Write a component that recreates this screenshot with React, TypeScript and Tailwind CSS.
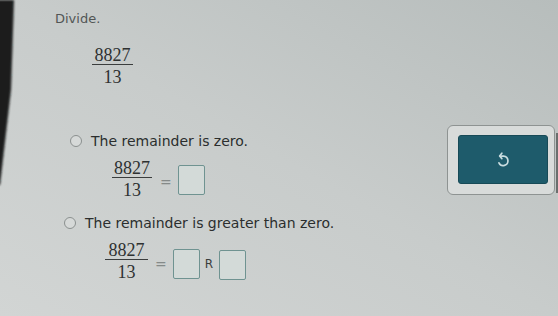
import React from "react";

const serif = { fontFamily: '"Liberation Serif", "Times New Roman", serif' };

function Fraction({ num, den, width }: { num: string; den: string; width: string }) {
  return (
    <div className={`flex flex-col items-center ${width}`} style={serif}>
      <div className="w-full text-center text-[18px] leading-[18px] text-[#2e3131]">{num}</div>
      <div className="w-full h-[1px] bg-[#3a3d3d]" />
      <div className="mt-[3px] w-full text-center text-[18px] leading-[18px] text-[#2e3131]">{den}</div>
    </div>
  );
}

function Box() {
  return <div className="w-[27px] h-[30px] rounded-[2px] border border-[#6f9391] bg-[#d3dad8]" />;
}

function Radio() {
  return <div className="w-[12px] h-[12px] rounded-full border-[1.5px] border-[#8b908f] bg-[#d6d9d8]" />;
}

function Eq() {
  return (
    <span className="text-[14px] leading-[14px] text-[#858a89]" style={{ fontFamily: '"DejaVu Sans", sans-serif' }}>
      =
    </span>
  );
}

export default function App() {
  const sans = { fontFamily: '"DejaVu Sans", Verdana, sans-serif' };
  return (
    <div
      className="relative flex w-[558px] h-[316px] overflow-hidden bg-linear-to-bl from-[#b7bdbc] via-[#c8cccb] to-[#d2d5d4]"
      style={sans}
    >
      <svg className="absolute left-0 top-0" width="20" height="200" viewBox="0 0 20 200">
        <defs>
          <filter id="blur">
            <feGaussianBlur stdDeviation="1" />
          </filter>
        </defs>
        <polygon points="-2,0 14,0 11,90 0,185 -2,185" fill="#1b1f1f" filter="url(#blur)" />
      </svg>

      <div className="flex flex-col w-[447px] pt-[11px]">
        <div className="ml-[55px] text-[13px] leading-[16px] text-[#525656]">Divide.</div>

        <div className="mt-[19px] ml-[92px]">
          <Fraction num="8827" den="13" width="w-[41px]" />
        </div>

        <div className="mt-[46px] ml-[70px] flex items-center h-[18px]">
          <Radio />
          <span className="ml-[9px] text-[14px] leading-[18px] text-[#2b2e2e]">The remainder is zero.</span>
        </div>

        <div className="mt-[9px] ml-[112px] flex items-center">
          <Fraction num="8827" den="13" width="w-[40px]" />
          <div className="ml-[8px] mt-[6px]">
            <Eq />
          </div>
          <div className="ml-[6px] mt-[2px]">
            <Box />
          </div>
        </div>

        <div className="mt-[15px] ml-[64px] flex items-center h-[18px]">
          <Radio />
          <span className="ml-[9px] text-[14px] leading-[18px] text-[#2b2e2e]">
            The remainder is greater than zero.
          </span>
        </div>

        <div className="mt-[9px] ml-[105px] flex items-center">
          <Fraction num="8827" den="13" width="w-[43px]" />
          <div className="ml-[7px] mt-[6px]">
            <Eq />
          </div>
          <div className="ml-[6px] mt-[6px]">
            <Box />
          </div>
          <span className="ml-[5px] mt-[6px] text-[12px] leading-[12px] text-[#3a3d3d]">R</span>
          <div className="ml-[6px] mt-[8px]">
            <Box />
          </div>
        </div>
      </div>

      <div className="pt-[125px]">
        <div className="w-[108px] h-[70px] rounded-[6px] border border-[#8e9392] bg-[#d8dbda] pl-[10px] pt-[9px]">
          <div className="flex items-center justify-center w-[90px] h-[49px] rounded-[3px] border border-[#174a57] bg-[#1e5b6b]">
            <svg width="18" height="18" viewBox="0 0 16 16" fill="none" stroke="#c9dde0" strokeWidth="1.5" strokeLinecap="round" strokeLinejoin="round">
              <path d="M5.5 4.5 H8.5 A4.2 4.2 0 1 1 4.4 10.5" />
              <path d="M7 2 L5 4.5 L7 6.8" />
            </svg>
          </div>
        </div>
      </div>

      <div className="mt-[133px] ml-[1px] w-[2px] h-[60px] bg-[#6a6f6e]" />
    </div>
  );
}
